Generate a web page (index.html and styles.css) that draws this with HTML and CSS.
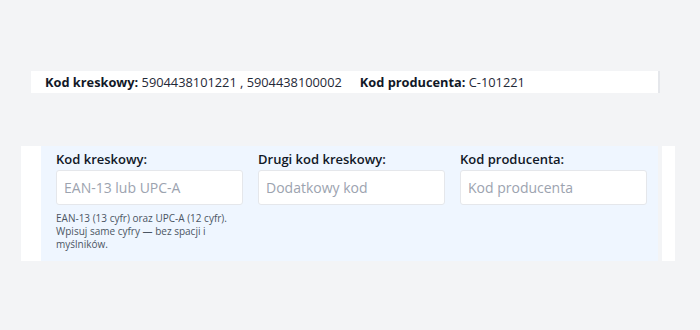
FILE: index.html
```html
<!DOCTYPE html>
<html lang="pl">
<head>
<meta charset="UTF-8">
<meta name="viewport" content="width=device-width, initial-scale=1.0">
<title>Kody produktu</title>
<link rel="stylesheet" href="styles.css">
</head>
<body>

<div class="summary">
  <span class="summary-item"><b>Kod kreskowy:</b> 5904438101221 , 5904438100002</span>
  <span class="summary-item"><b>Kod producenta:</b> C-101221</span>
</div>

<div class="panel">
  <div class="panel-edge"></div>
  <div class="codes">
    <div class="field">
      <label for="barcode">Kod kreskowy:</label>
      <input type="text" id="barcode" placeholder="EAN-13 lub UPC-A">
      <p class="hint">EAN-13 (13 cyfr) oraz UPC-A (12 cyfr). Wpisuj same cyfry — bez spacji i myślników.</p>
    </div>
    <div class="field">
      <label for="barcode2">Drugi kod kreskowy:</label>
      <input type="text" id="barcode2" placeholder="Dodatkowy kod">
    </div>
    <div class="field">
      <label for="mpn">Kod producenta:</label>
      <input type="text" id="mpn" placeholder="Kod producenta">
    </div>
  </div>
  <div class="panel-side"></div>
</div>

</body>
</html>
```

FILE: styles.css
```css
  body {
    margin: 0;
    background-color: #f3f4f6;
    font-family: "Open Sans", Arial, sans-serif;
    color: #111827;
  }
  .summary {
    display: flex;
    align-items: center;
    gap: 18px;
    width: 613px;
    height: 22px;
    margin: 71px 0 0 31px;
    padding-left: 14px;
    background-color: white;
    box-shadow: 2px 0 0 #e5e7eb;
    font-size: 12.8px;
    color: #1f2937;
  }
  .summary b {
    color: #111827;
  }
  .panel {
    display: flex;
    gap: 4px;
    width: 654px;
    height: 115px;
    margin: 53px 0 0 21px;
  }
  .panel-edge {
    width: 20px;
    margin-right: -4px; /* no gap on the left side */
    background-color: white;
  }
  .panel-side {
    width: 13px;
    background-color: white;
  }
  .codes {
    flex: 1;
    display: grid;
    grid-template-columns: 187px 187px 187px;
    column-gap: 15px;
    align-items: start;
    padding: 3px 0 0 15px;
    background-color: #eff6ff;
  }
  .field label {
    display: block;
    font-size: 13px;
    font-weight: 600;
    line-height: 20px;
    margin-bottom: 1px;
  }
  .field input {
    box-sizing: border-box;
    width: 100%;
    height: 35px;
    padding: 0 7px;
    border: 1px solid #e5e7eb;
    border-radius: 3px;
    background-color: white;
    font-family: inherit;
    font-size: 14px;
    color: #111827;
    outline: none;
  }
  .field input::placeholder {
    color: #9ca3af;
  }
  .hint {
    margin: 7px 0 0;
    font-size: 10px;
    line-height: 13px;
    color: #4b5563;
  }
```
